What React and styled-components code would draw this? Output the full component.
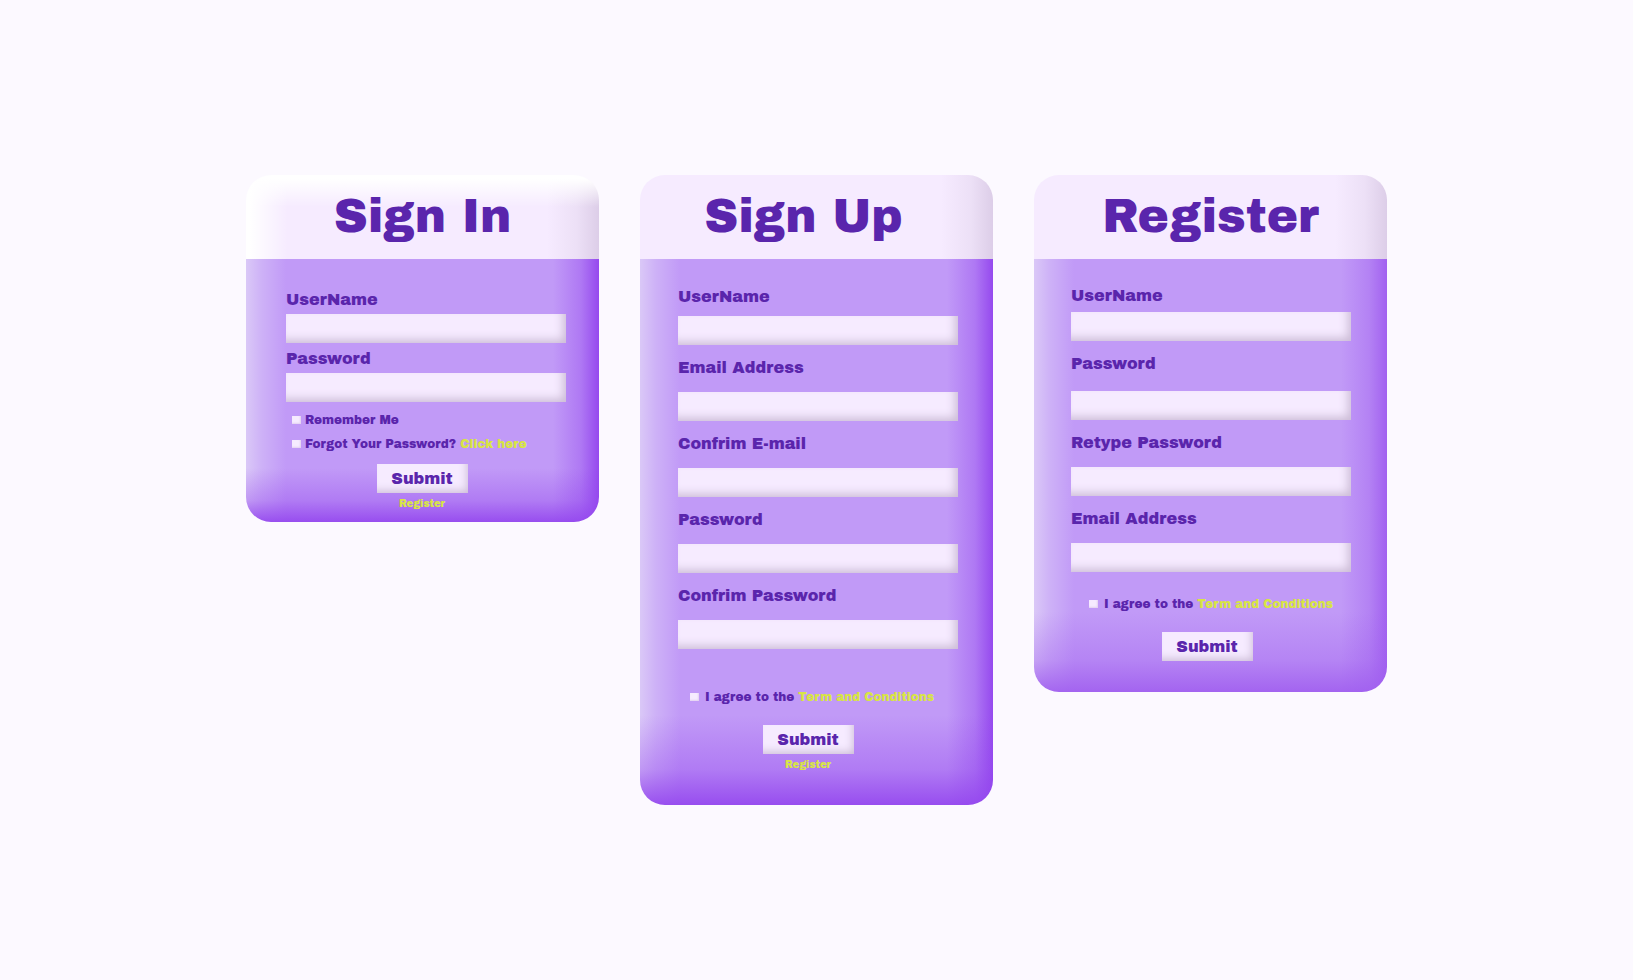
import React, { useId } from "react";
import styled, { createGlobalStyle } from "styled-components";

const signInFields = [
  { label: "UserName", type: "text", gap: 4 },
  { label: "Password", type: "password", gap: 4 },
];

const signUpFields = [
  { label: "UserName", type: "text", gap: 9 },
  { label: "Email Address", type: "email", gap: 14 },
  { label: "Confrim E-mail", type: "email", gap: 14 },
  { label: "Password", type: "password", gap: 14 },
  { label: "Confrim Password", type: "password", gap: 14 },
];

const registerFields = [
  { label: "UserName", type: "text", gap: 6 },
  { label: "Password", type: "password", gap: 17 },
  { label: "Retype Password", type: "password", gap: 14 },
  { label: "Email Address", type: "email", gap: 14 },
];

const Field = ({ label, type, gap }) => {
  const id = useId();

  return (
    <FieldBox $gap={gap}>
      <FieldLabel htmlFor={id}>{label}</FieldLabel>
      <FieldInput id={id} type={type} />
    </FieldBox>
  );
};

const CheckRow = ({ label, link, wide }) => {
  const id = useId();

  return (
    <CheckBox $wide={wide}>
      <CheckInput id={id} type="checkbox" />
      <span>
        <label htmlFor={id}>{label}</label>
        {link && (
          <>
            {" "}
            <AccentLink href="#">{link}</AccentLink>
          </>
        )}
      </span>
    </CheckBox>
  );
};

const submit = (event) => event.preventDefault();

const SignIn = () => (
  <Card>
    <Header $glow>
      <Title>Sign In</Title>
    </Header>
    <Form onSubmit={submit} $top={31} $bottom={12} $left={40} $right={33}>
      <Fields $gap={6}>
        {signInFields.map((field) => (
          <Field key={field.label} {...field} />
        ))}
      </Fields>
      <Checks $top={10} $left={6}>
        <CheckRow label="Remember Me" />
        <CheckRow label="Forgot Your Password?" link="Click here" />
      </Checks>
      <Actions $top={12} $shift={8}>
        <SubmitButton type="submit">Submit</SubmitButton>
        <SmallLink href="#">Register</SmallLink>
      </Actions>
    </Form>
  </Card>
);

const SignUp = () => (
  <Card>
    <Header $shift={26}>
      <Title>Sign Up</Title>
    </Header>
    <Form
      onSubmit={submit}
      $top={28}
      $bottom={34}
      $left={38}
      $right={35}
      $fade={90}
    >
      <Fields $gap={13}>
        {signUpFields.map((field) => (
          <Field key={field.label} {...field} />
        ))}
      </Fields>
      <Checks $top={40} $left={12}>
        <CheckRow label="I agree to the" link="Term and Conditions" wide />
      </Checks>
      <Actions $top={20} $shift={20}>
        <SubmitButton type="submit">Submit</SubmitButton>
        <SmallLink href="#">Register</SmallLink>
      </Actions>
    </Form>
  </Card>
);

const Register = () => (
  <Card $soft>
    <Header>
      <Title>Register</Title>
    </Header>
    <Form
      onSubmit={submit}
      $top={27}
      $bottom={31}
      $left={37}
      $right={36}
      $fade={80}
    >
      <Fields $gap={13}>
        {registerFields.map((field) => (
          <Field key={field.label} {...field} />
        ))}
      </Fields>
      <Checks $top={24} $left={18}>
        <CheckRow label="I agree to the" link="Term and Conditions" wide />
      </Checks>
      <Actions $top={20} $shift={8}>
        <SubmitButton type="submit">Submit</SubmitButton>
      </Actions>
    </Form>
  </Card>
);

const App = () => (
  <>
    <GlobalStyle />
    <Page>
      <SignIn />
      <SignUp />
      <Register />
    </Page>
  </>
);

const GlobalStyle = createGlobalStyle`
  * {
    box-sizing: border-box;
  }
  body {
    margin: 0;
    background: #fcf9ff;
    color: #5a25ac;
    font-family: "Archivo Black", Inter, "Liberation Sans", sans-serif;
    font-weight: 400;
  }
`;

const Page = styled.main`
  display: flex;
  flex-wrap: wrap;
  justify-content: center;
  align-items: flex-start;
  gap: 41px;
  min-height: 100vh;
  padding: 175px 24px;
`;

const Card = styled.section`
  width: 353px;
  --edge: ${({ $soft }) => ($soft ? "160, 94, 239" : "147, 69, 238")};
`;

const Header = styled.header`
  display: flex;
  justify-content: center;
  align-items: center;
  height: 84px;
  padding-right: ${({ $shift = 0 }) => $shift}px;
  border-radius: 25px 25px 0 0;
  background: ${({ $glow }) =>
      $glow &&
      `linear-gradient(to right, #fff 4px, rgba(255, 255, 255, 0) 42px),
      linear-gradient(#fff 4px, rgba(255, 255, 255, 0) 32px),`}
    linear-gradient(
      to left,
      rgba(214, 198, 226, 0.8),
      rgba(214, 198, 226, 0.3) 22px,
      rgba(214, 198, 226, 0) 52px
    ),
    #f6ebff;
`;

const Title = styled.h1`
  margin: 0;
  font-size: 47px;
  line-height: 58px;
  font-weight: 400;
`;

const Form = styled.form`
  padding: ${({ $top, $right, $bottom, $left }) =>
    `${$top}px ${$right}px ${$bottom}px ${$left}px`};
  border-radius: 0 0 25px 25px;
  background:
    linear-gradient(
      to top,
      rgba(var(--edge), 0.9),
      rgba(var(--edge), 0.36) 40%,
      rgba(var(--edge), 0)
    ) bottom / 100% ${({ $fade = 54 }) => $fade}px no-repeat,
    linear-gradient(
      to left,
      rgba(var(--edge), 0.95),
      rgba(var(--edge), 0.4) 18px,
      rgba(var(--edge), 0) 46px
    ),
    linear-gradient(
      to right,
      #dac8f7,
      rgba(218, 200, 247, 0.5) 16px,
      rgba(218, 200, 247, 0) 40px
    ),
    #c19af7;
`;

const Fields = styled.div`
  display: flex;
  flex-direction: column;
  gap: ${({ $gap }) => $gap}px;
`;

const FieldBox = styled.div`
  display: flex;
  flex-direction: column;
  gap: ${({ $gap }) => $gap}px;
`;

const FieldLabel = styled.label`
  font-size: 16px;
  line-height: 20px;
`;

const FieldInput = styled.input`
  width: 100%;
  height: 29px;
  padding: 0 8px;
  border: none;
  border-radius: 0;
  background: #f6ebff;
  box-shadow: inset -5px -5px 10px -2px #cbbbd6;
  color: inherit;
  font: inherit;
`;

const Checks = styled.div`
  display: flex;
  flex-direction: column;
  gap: 8px;
  padding-top: ${({ $top }) => $top}px;
  padding-left: ${({ $left }) => $left}px;
`;

const CheckBox = styled.div`
  display: flex;
  align-items: center;
  gap: ${({ $wide }) => ($wide ? 6 : 4)}px;
  font-size: 12px;
  line-height: 16px;
  white-space: nowrap;
`;

const CheckInput = styled.input`
  appearance: none;
  flex: none;
  width: 9px;
  height: 8px;
  margin: 0;
  background: #f6ebff;
  box-shadow: inset -1px -1px 2px #e2d0f0;
  &:checked {
    background: #5a25ac;
  }
`;

const AccentLink = styled.a`
  color: #d8e545;
  text-decoration: none;
`;

const Actions = styled.div`
  display: flex;
  flex-direction: column;
  align-items: center;
  gap: 5px;
  padding-top: ${({ $top }) => $top}px;
  padding-right: ${({ $shift }) => $shift}px;
`;

const SubmitButton = styled.button`
  width: 91px;
  height: 29px;
  padding: 0;
  border: none;
  background: #f6ebff;
  box-shadow: inset -4px -5px 8px -3px #cbbbd6;
  color: inherit;
  font: inherit;
  font-size: 16px;
  cursor: pointer;
`;

const SmallLink = styled(AccentLink)`
  font-size: 10px;
  line-height: 12px;
`;

export default App;
